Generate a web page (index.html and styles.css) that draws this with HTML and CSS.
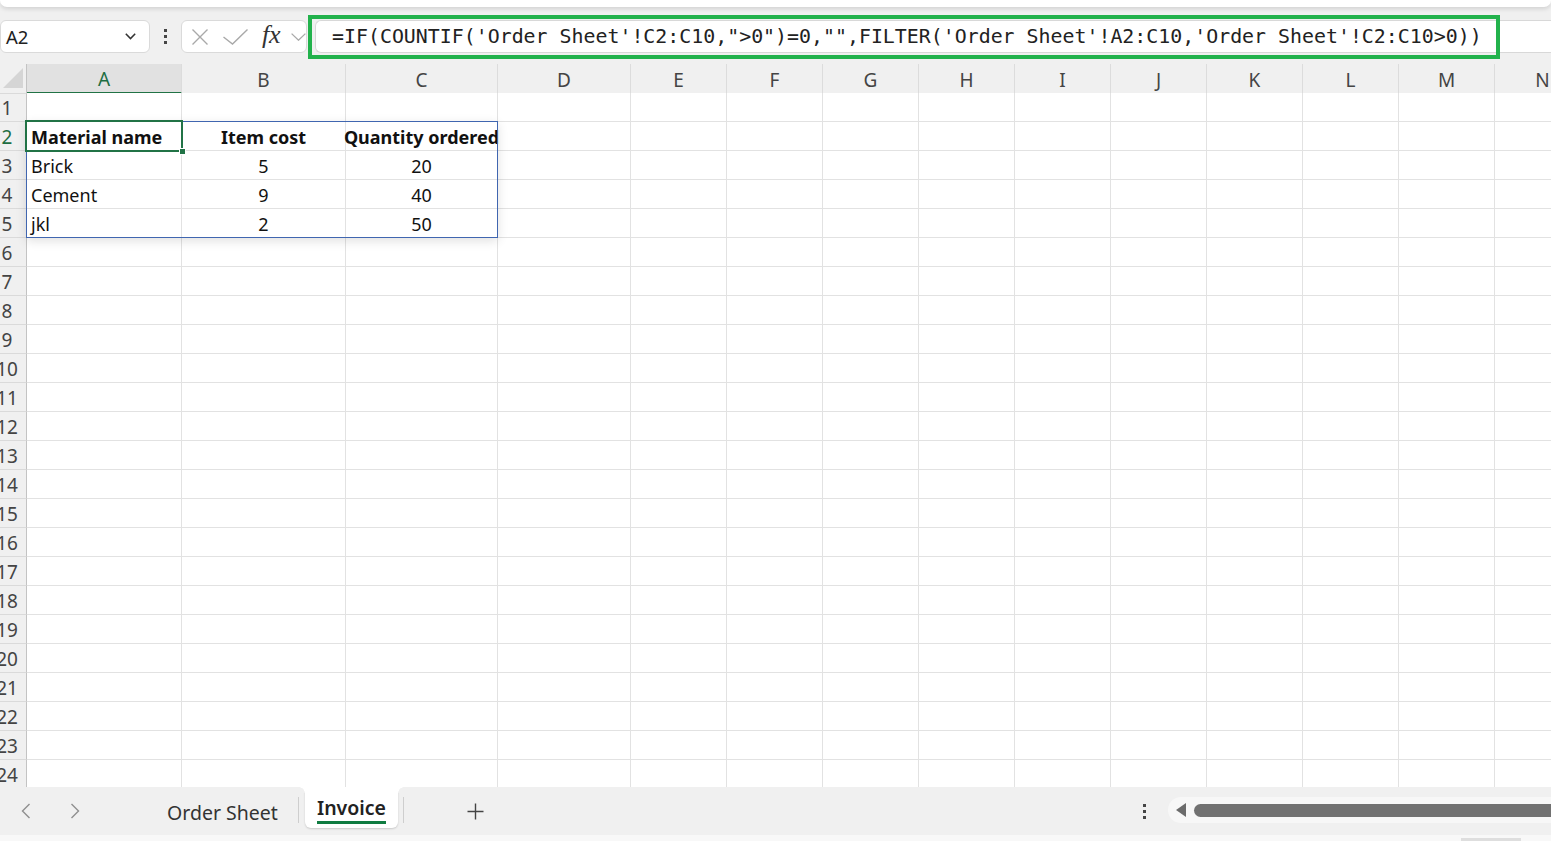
FILE: index.html
```html
<!DOCTYPE html>
<html lang="en">
<head>
<meta charset="utf-8">
<title>Invoice</title>
<link rel="stylesheet" href="styles.css">
</head>
<body>
<div class="app">
  <div class="ribbon-edge"></div>

  <div class="formula-row">
    <div class="namebox">
      <span>A2</span>
      <svg class="nb-chev" width="11" height="7" viewBox="0 0 11 7"><polyline points="0.8,0.8 5.5,5.6 10.2,0.8" fill="none" stroke="#333" stroke-width="1.5"/></svg>
    </div>
    <div class="kebab"><i></i><i></i><i></i></div>
    <div class="fx-box">
      <svg class="ico-x" width="16" height="16" viewBox="0 0 16 16"><path d="M0.5 0.5 L15.5 15.5 M15.5 0.5 L0.5 15.5" stroke="#a9a9a9" stroke-width="1.4" fill="none"/></svg>
      <svg class="ico-ok" width="25" height="16" viewBox="0 0 25 16"><polyline points="0.5,8 9.5,15 24.5,0.6" fill="none" stroke="#a9a9a9" stroke-width="1.4"/></svg>
      <span class="fx">fx</span>
      <svg class="ico-chev" width="15" height="8" viewBox="0 0 15 8"><polyline points="0.6,0.6 7.5,7.2 14.4,0.6" fill="none" stroke="#a9a9a9" stroke-width="1.3"/></svg>
    </div>
    <div class="formula-wrap">
      <div class="formula-input">=IF(COUNTIF('Order Sheet'!C2:C10,"&gt;0")=0,"",FILTER('Order Sheet'!A2:C10,'Order Sheet'!C2:C10&gt;0))</div>
      <div class="callout"></div>
    </div>
  </div>

  <div class="sheet">
    <div class="row head">
      <div class="rh corner-cell"><span class="corner"></span></div>
      <div class="sel">A</div><div>B</div><div>C</div><div>D</div><div>E</div><div>F</div><div>G</div><div>H</div><div>I</div><div>J</div><div>K</div><div>L</div><div>M</div><div>N</div>
    </div>
    <div class="row"><div class="rh"><span>1</span></div><div></div><div></div><div></div><div></div><div></div><div></div><div></div><div></div><div></div><div></div><div></div><div></div><div></div><div></div></div>
    <div class="row"><div class="rh on"><span>2</span></div><div class="b">Material name</div><div class="b ctr">Item cost</div><div class="b ctr over">Quantity ordered</div><div></div><div></div><div></div><div></div><div></div><div></div><div></div><div></div><div></div><div></div><div></div></div>
    <div class="row"><div class="rh"><span>3</span></div><div>Brick</div><div class="ctr">5</div><div class="ctr">20</div><div></div><div></div><div></div><div></div><div></div><div></div><div></div><div></div><div></div><div></div><div></div></div>
    <div class="row"><div class="rh"><span>4</span></div><div>Cement</div><div class="ctr">9</div><div class="ctr">40</div><div></div><div></div><div></div><div></div><div></div><div></div><div></div><div></div><div></div><div></div><div></div></div>
    <div class="row"><div class="rh"><span>5</span></div><div>jkl</div><div class="ctr">2</div><div class="ctr">50</div><div></div><div></div><div></div><div></div><div></div><div></div><div></div><div></div><div></div><div></div><div></div></div>
    <div class="row"><div class="rh"><span>6</span></div><div></div><div></div><div></div><div></div><div></div><div></div><div></div><div></div><div></div><div></div><div></div><div></div><div></div><div></div></div>
    <div class="row"><div class="rh"><span>7</span></div><div></div><div></div><div></div><div></div><div></div><div></div><div></div><div></div><div></div><div></div><div></div><div></div><div></div><div></div></div>
    <div class="row"><div class="rh"><span>8</span></div><div></div><div></div><div></div><div></div><div></div><div></div><div></div><div></div><div></div><div></div><div></div><div></div><div></div><div></div></div>
    <div class="row"><div class="rh"><span>9</span></div><div></div><div></div><div></div><div></div><div></div><div></div><div></div><div></div><div></div><div></div><div></div><div></div><div></div><div></div></div>
    <div class="row"><div class="rh"><span>10</span></div><div></div><div></div><div></div><div></div><div></div><div></div><div></div><div></div><div></div><div></div><div></div><div></div><div></div><div></div></div>
    <div class="row"><div class="rh"><span>11</span></div><div></div><div></div><div></div><div></div><div></div><div></div><div></div><div></div><div></div><div></div><div></div><div></div><div></div><div></div></div>
    <div class="row"><div class="rh"><span>12</span></div><div></div><div></div><div></div><div></div><div></div><div></div><div></div><div></div><div></div><div></div><div></div><div></div><div></div><div></div></div>
    <div class="row"><div class="rh"><span>13</span></div><div></div><div></div><div></div><div></div><div></div><div></div><div></div><div></div><div></div><div></div><div></div><div></div><div></div><div></div></div>
    <div class="row"><div class="rh"><span>14</span></div><div></div><div></div><div></div><div></div><div></div><div></div><div></div><div></div><div></div><div></div><div></div><div></div><div></div><div></div></div>
    <div class="row"><div class="rh"><span>15</span></div><div></div><div></div><div></div><div></div><div></div><div></div><div></div><div></div><div></div><div></div><div></div><div></div><div></div><div></div></div>
    <div class="row"><div class="rh"><span>16</span></div><div></div><div></div><div></div><div></div><div></div><div></div><div></div><div></div><div></div><div></div><div></div><div></div><div></div><div></div></div>
    <div class="row"><div class="rh"><span>17</span></div><div></div><div></div><div></div><div></div><div></div><div></div><div></div><div></div><div></div><div></div><div></div><div></div><div></div><div></div></div>
    <div class="row"><div class="rh"><span>18</span></div><div></div><div></div><div></div><div></div><div></div><div></div><div></div><div></div><div></div><div></div><div></div><div></div><div></div><div></div></div>
    <div class="row"><div class="rh"><span>19</span></div><div></div><div></div><div></div><div></div><div></div><div></div><div></div><div></div><div></div><div></div><div></div><div></div><div></div><div></div></div>
    <div class="row"><div class="rh"><span>20</span></div><div></div><div></div><div></div><div></div><div></div><div></div><div></div><div></div><div></div><div></div><div></div><div></div><div></div><div></div></div>
    <div class="row"><div class="rh"><span>21</span></div><div></div><div></div><div></div><div></div><div></div><div></div><div></div><div></div><div></div><div></div><div></div><div></div><div></div><div></div></div>
    <div class="row"><div class="rh"><span>22</span></div><div></div><div></div><div></div><div></div><div></div><div></div><div></div><div></div><div></div><div></div><div></div><div></div><div></div><div></div></div>
    <div class="row"><div class="rh"><span>23</span></div><div></div><div></div><div></div><div></div><div></div><div></div><div></div><div></div><div></div><div></div><div></div><div></div><div></div><div></div></div>
    <div class="row"><div class="rh"><span>24</span></div><div></div><div></div><div></div><div></div><div></div><div></div><div></div><div></div><div></div><div></div><div></div><div></div><div></div><div></div></div>

    <div class="spill"></div>
    <div class="active-cell"><span class="handle"></span></div>
  </div>

  <div class="tabbar">
    <div class="nav">
      <svg width="10" height="16" viewBox="0 0 10 16"><polyline points="8.5,1 1.5,8 8.5,15" fill="none" stroke="#8f8f8f" stroke-width="1.4"/></svg>
      <svg width="10" height="16" viewBox="0 0 10 16"><polyline points="1.5,1 8.5,8 1.5,15" fill="none" stroke="#8f8f8f" stroke-width="1.4"/></svg>
    </div>
    <div class="tab">Order Sheet</div>
    <span class="sep"></span>
    <div class="tab active"><span class="tab-label">Invoice</span></div>
    <span class="sep second"></span>
    <div class="add">
      <svg width="17" height="17" viewBox="0 0 17 17"><path d="M8.5 0.5 V16.5 M0.5 8.5 H16.5" stroke="#444" stroke-width="1.4" fill="none"/></svg>
    </div>
    <div class="right-tools">
      <div class="kebab small"><i></i><i></i><i></i></div>
      <div class="hscroll">
        <svg width="10" height="14" viewBox="0 0 10 14"><polygon points="10,0 0,7 10,14" fill="#6b6b6b"/></svg>
        <div class="thumb"></div>
      </div>
    </div>
  </div>

  <div class="status-strip"><span class="status-block"></span></div>
</div>
</body>
</html>
```

FILE: styles.css
```css
* { box-sizing: border-box; }

html, body {
  margin: 0;
  height: 100%;
}

body {
  background: #f0f0f0;
  font-family: "Noto Sans", "Open Sans", sans-serif;
  color: #1f1f1f;
  overflow: hidden;
}

.app {
  display: flex;
  flex-direction: column;
  height: 841px;
}

/* top ribbon edge */
.ribbon-edge {
  flex: none;
  height: 7px;
  background: #fff;
  border-radius: 0 0 9px 9px;
  box-shadow: 0 2px 4px rgba(0, 0, 0, 0.13);
  position: relative;
  z-index: 2;
}

/* formula row */
.formula-row {
  flex: none;
  height: 57px;
  display: flex;
  align-items: flex-start;
  padding-top: 13px;
}

.namebox {
  width: 150px;
  height: 33px;
  background: #fff;
  border: 1px solid #dadada;
  border-radius: 6px;
  display: flex;
  align-items: center;
  justify-content: space-between;
  padding: 0 13px 0 5px;
  font-size: 18.5px;
  color: #222;
}

.kebab {
  flex: none;
  width: 31px;
  height: 33px;
  display: flex;
  flex-direction: column;
  align-items: center;
  justify-content: center;
  gap: 3px;
}

.kebab i {
  display: block;
  width: 3px;
  height: 3px;
  background: #454545;
}

.fx-box {
  width: 126px;
  height: 33px;
  background: #fff;
  border: 1px solid #dadada;
  border-radius: 6px;
  display: flex;
  align-items: center;
  padding-left: 10px;
}

.ico-ok { margin-left: 15px; }

.fx {
  margin-left: 14px;
  font-family: "Liberation Serif", serif;
  font-style: italic;
  font-size: 26px;
  line-height: 1;
  color: #333;
  width: 21px;
  letter-spacing: -0.3px;
  margin-top: -3px;
}

.ico-chev { margin-left: 8px; margin-top: 1px; }

.formula-wrap {
  flex: 1;
  position: relative;
  height: 33px;
}

.formula-input {
  margin-left: 8px;
  height: 33px;
  background: #fff;
  border: 1px solid #d8d8d8;
  border-right: none;
  border-radius: 6px 0 0 6px;
  padding-left: 16px;
  font-family: "DejaVu Sans Mono", "Liberation Mono", monospace;
  font-size: 19.9px;
  line-height: 32px;
  white-space: pre;
  color: #222;
  overflow: hidden;
}

.callout {
  position: absolute;
  left: 1px;
  top: -5px;
  width: 1192px;
  height: 44px;
  border: 4px solid #22b24c;
}

/* sheet */
.sheet {
  flex: 1;
  position: relative;
  overflow: hidden;
  background: #fff;
}

.row {
  display: grid;
  grid-template-columns: 27px 155px 164px 152px 133px repeat(10, 96px);
  height: 29px;
}

.row > div {
  border-right: 1px solid #e2e2e2;
  border-bottom: 1px solid #e2e2e2;
  background: #fff;
  font-size: 18px;
  display: flex;
  align-items: center;
  white-space: nowrap;
  padding: 2px 4px 0;
  color: #111;
}

.row > div.b { font-weight: 700; }
.row > div.ctr { justify-content: center; }
.row > div.over { z-index: 1; padding: 2px 0 0; }

.row > .rh {
  background: #f0f0f0;
  border-right-color: #c3c3c3;
  border-bottom-color: #dadada;
  justify-content: center;
  padding: 1px 12px 0 0;
  overflow: hidden;
  color: #444;
  font-size: 19px;
}

.row > .rh.on { color: #1e6e42; }

.head > div {
  background: #f0f0f0;
  border-bottom-color: #c3c3c3;
  border-right-color: #dcdcdc;
  justify-content: center;
  color: #444;
  font-size: 19px;
  padding-top: 2px;
}

.head > div.sel {
  background: #e1e1e1;
  border-bottom: 2px solid #217346;
  color: #1e6e42;
}

.head > .corner-cell {
  position: relative;
  border-right-color: #c3c3c3;
}

.corner {
  position: absolute;
  left: 3px;
  top: 4px;
  width: 20px;
  height: 20px;
  background: #d5d5d5;
  clip-path: polygon(100% 0, 100% 100%, 0 100%);
}

/* overlays */
.spill {
  position: absolute;
  left: 26px;
  top: 57px;
  width: 472px;
  height: 117px;
  border: 1px solid #4066b0;
  box-shadow: 0 3px 10px rgba(0, 0, 0, 0.12);
  z-index: 2;
}

.active-cell {
  position: absolute;
  left: 25px;
  top: 56px;
  width: 158px;
  height: 32px;
  border: 2px solid #217346;
  z-index: 3;
}

.handle {
  position: absolute;
  right: -5px;
  bottom: -5px;
  width: 7px;
  height: 7px;
  background: #217346;
  border: 1px solid #fff;
}

/* sheet tabs */
.tabbar {
  flex: none;
  height: 48px;
  display: flex;
  align-items: flex-start;
  background: #f0f0f0;
  overflow: hidden;
}

.nav {
  flex: none;
  width: 150px;
  height: 48px;
  display: flex;
  align-items: center;
  padding-left: 21px;
  gap: 39px;
}

.tab {
  flex: none;
  width: 148px;
  height: 48px;
  display: flex;
  align-items: center;
  padding: 2px 0 0 17px;
  font-size: 19.5px;
  color: #333;
  white-space: nowrap;
}

.sep {
  flex: none;
  width: 1px;
  height: 26px;
  margin-top: 10px;
  background: #cecece;
}

.tab.active {
  position: relative;
  width: 93px;
  height: 41px;
  margin-left: 6px;
  padding: 9px 0 0;
  background: #fff;
  border-radius: 0 0 6px 6px;
  box-shadow: 0 1px 2px rgba(0, 0, 0, 0.16);
  flex-direction: column;
  align-items: center;
  justify-content: flex-start;
  color: #222;
}

.tab.active::before,
.tab.active::after {
  content: "";
  position: absolute;
  top: 0;
  width: 6px;
  height: 6px;
}

.tab.active::before {
  left: -6px;
  background: radial-gradient(circle 6px at 0 100%, #f0f0f0 92%, #fff 100%);
}

.tab.active::after {
  right: -6px;
  background: radial-gradient(circle 6px at 100% 100%, #f0f0f0 92%, #fff 100%);
}

.tab-label {
  font-weight: 600;
  line-height: 23px;
  padding-bottom: 2px;
  border-bottom: 3px solid #107c41;
}

.sep.second { margin-left: 5px; }

.add {
  flex: none;
  width: 142px;
  height: 48px;
  display: flex;
  align-items: center;
  justify-content: center;
}

.right-tools {
  margin-left: auto;
  width: 419px;
  flex: none;
  display: flex;
  align-items: flex-start;
}

.kebab.small {
  width: 24px;
  height: 48px;
}

.hscroll {
  margin-left: 12px;
  margin-top: 10px;
  width: 400px;
  flex: none;
  height: 26px;
  border-radius: 13px;
  background: #f7f7f7;
  display: flex;
  align-items: center;
  padding-left: 8px;
}

.thumb {
  margin-left: 8px;
  flex: 1;
  height: 13px;
  border-radius: 7px;
  background: #717171;
}

.status-strip {
  flex: none;
  height: 6px;
  background: #f8f8f8;
  display: flex;
  justify-content: flex-end;
  align-items: flex-end;
  padding-right: 30px;
}

.status-block {
  width: 60px;
  height: 3px;
  background: #dedede;
}
```
